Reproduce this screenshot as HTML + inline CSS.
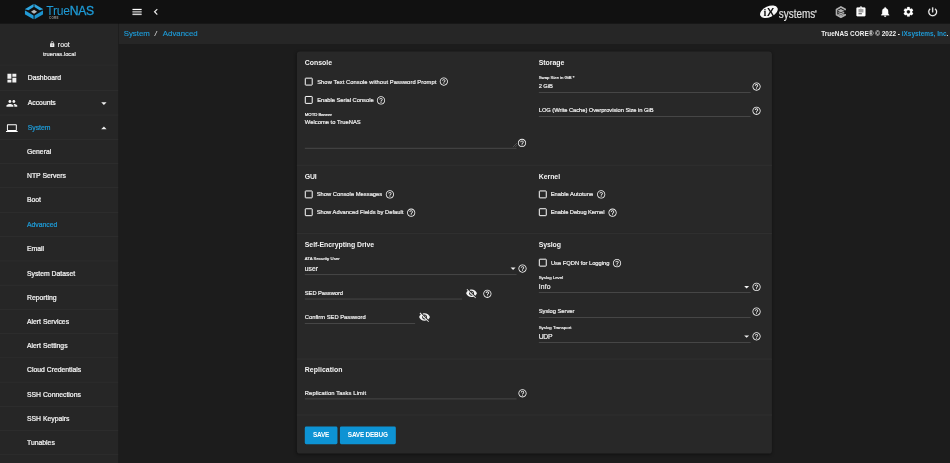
<!DOCTYPE html>
<html lang="en">
<head>
<meta charset="utf-8">
<title>TrueNAS - System Advanced</title>
<style>
*{box-sizing:border-box;margin:0;padding:0}
html,body{width:950px;height:463px;overflow:hidden;background:#1c1c1c}
body{font-family:"Liberation Sans",sans-serif;color:#fff}
#root{position:absolute;left:0;top:0;width:1920px;height:936px;transform:scale(0.494792,0.494658);transform-origin:0 0;background:#1c1c1c;overflow:hidden;filter:blur(0.45px)}
svg{display:block}
/* top bar */
#topbar{position:absolute;left:0;top:0;width:1920px;height:48px;background:#111}
#logo{position:absolute;left:0;top:0;width:240px;height:48px}
#logo .name{position:absolute;left:93.500px;top:6px;font-size:24.5px;color:#1e9bd7;letter-spacing:-0.55px;line-height:34px}
#logo .name b{font-weight:normal;-webkit-text-stroke:0.6px #1e9bd7}
#logo .core{position:absolute;left:99px;top:33px;font-size:6px;letter-spacing:0.6px;color:#999;font-weight:bold;line-height:8px}
.tbi{position:absolute;top:12px;width:24px;height:24px;fill:#fff;stroke:#fff;stroke-width:0.5px}
/* sidebar */
#side{position:absolute;left:0;top:48px;width:239px;height:888px;background:#262626}
#user{height:84px;border-bottom:1px solid #303030;text-align:center;position:relative}
#user .u1{position:absolute;left:0;width:240px;top:32.5px;font-size:14px;line-height:18px;color:#ededed;-webkit-text-stroke:0.3px}
#user .u2{position:absolute;left:0;width:240px;top:54px;font-size:11.7px;line-height:16px;color:#ededed;-webkit-text-stroke:0.35px}
.nav{position:relative;height:49.05px;border-bottom:1px solid #333;font-size:13.8px;line-height:49.5px;padding-left:54.5px;color:#f4f4f4;-webkit-text-stroke:0.45px}
.nav.top{height:50.7px;line-height:51.5px;padding-left:56px}
.nav.top svg{top:14px}
.nav.sys{height:49px;line-height:50.5px;padding-left:56px}
.nav.sys svg{top:13.5px}
.nav svg{position:absolute;left:12px;top:12px;width:24px;height:24px;fill:#f0f0f0}
.nav svg.ar{left:197px;width:26px;height:26px;margin-top:-1px}
.nav.act{color:#1e9bd7}
.nav.act svg.ic{fill:#fff}
/* breadcrumb */
#crumb{position:absolute;left:240px;top:48px;width:1680px;height:41px;background:#262626}
#crumb .bc{position:absolute;left:10px;top:0;font-size:15.8px;-webkit-text-stroke:0.3px;line-height:40px;color:#1e9bd7}
#crumb .bc i{color:#ddd;font-style:italic;padding:0 9px 0 10px;font-size:14px}
#crumb .cp{position:absolute;right:3.5px;top:0;font-size:13px;line-height:40px;color:#f0f0f0;font-weight:bold}
#crumb .cp span{color:#1e9bd7}
/* card */
#card{position:absolute;left:600px;top:104px;width:960px;height:813px;background:#282828;border-radius:6px;box-shadow:0 2px 6px rgba(0,0,0,.35)}
.hr{position:absolute;left:0;width:960px;height:2px;background:#303030;margin-top:-0.5px}
.h{position:absolute;font-size:14px;font-weight:bold;line-height:18px;color:#f4f4f4}
.cb{position:absolute;width:16px;height:16px;border:2.8px solid #fff;border-radius:2px}
.lb{position:absolute;font-size:11.7px;line-height:16px;color:#f2f2f2;white-space:nowrap;-webkit-text-stroke:0.38px #f2f2f2}
.lb.sv{font-size:13.7px}
.sl{position:absolute;font-size:8.7px;line-height:12px;color:#f2f2f2;white-space:nowrap;-webkit-text-stroke:0.38px #f2f2f2}
.ul{position:absolute;height:1px;background:#666}
.q{position:absolute;width:20px;height:20px;fill:#f2f2f2}
.eye{position:absolute;width:24px;height:24px;fill:#f2f2f2}
.dd{position:absolute;width:24px;height:24px;fill:#f2f2f2}
.btn{position:absolute;top:759px;height:36px;background:#0d93d4;border-radius:3px;color:#fff;font-size:13px;letter-spacing:-0.45px;font-weight:bold;line-height:36px;text-align:center}
</style>
</head>
<body>
<div id="root">
<div id="topbar">
<div id="logo">
<svg style="position:absolute;left:49.500px;top:7.500px" width="37.600" height="32" viewBox="0 0 220 180" preserveAspectRatio="none">
<polygon points="0,60 105,0 105,36 44,71" fill="#2ea6e0"/>
<polygon points="220,60 115,0 115,36 176,71" fill="#2ea6e0"/>
<polygon points="110,66 146,88 110,110 74,88" fill="#b4b8bb"/>
<polygon points="0,72 104,130 104,174 0,116" fill="#229bd6"/>
<polygon points="220,72 116,130 116,174 220,116" fill="#1d93cd"/>
</svg>
<div class="name">True<b>NAS</b></div>
<div class="core">CORE</div>
</div>
<svg class="tbi" style="left:265px" viewBox="0 0 24 24"><path d="M3 18h18v-2H3v2zm0-5h18v-2H3v2zm0-7v2h18V6H3z"/></svg>
<svg class="tbi" style="left:303px" viewBox="0 0 24 24"><path d="M15.41 7.41L14 6l-6 6 6 6 1.41-1.41L10.83 12z"/></svg>
<svg style="position:absolute;left:1534px;top:9px" width="40" height="30" viewBox="0 0 40 30"><ellipse cx="20" cy="14.800" rx="19" ry="11" transform="rotate(-24 20 14.800)" fill="#f6f6f6"/><text x="9" y="22.500" font-family="Liberation Serif, serif" font-size="21" font-weight="bold" fill="#111">i</text><text x="16" y="23" font-family="Liberation Sans, sans-serif" font-size="22" font-weight="bold" fill="#111">X</text></svg>
<div style="position:absolute;left:1574px;top:10px;font-size:26.5px;line-height:30px;color:#e4e4e4;white-space:nowrap;transform:scaleX(0.755);transform-origin:0 0;-webkit-text-stroke:0.3px #e4e4e4">systems<span style="font-size:6px;vertical-align:10px">®</span></div>
<svg style="position:absolute;left:1687px;top:12px" width="25" height="25" viewBox="0 0 24 24" fill="none" stroke="#b0b0b0" stroke-width="3.200" stroke-linejoin="miter"><path d="M20.200 8.500 20.200 6.500 12 2 3.500 6.800v10.400L12 22l8.200-4.500V15.500"/><path d="M12 6 18.500 9.300 12 12.600 5.500 9.300Z" fill="#b0b0b0" stroke="none"/><path d="M7 12.600 12 15.200l6.500-3.300M7 16 12 18.600l6.500-3.300" stroke-width="2.200"/></svg>
<svg class="tbi" style="left:1728px" viewBox="0 0 24 24"><path d="M19 3h-4.180C14.400 1.840 13.300 1 12 1c-1.300 0-2.400.840-2.820 2H5c-1.100 0-2 .900-2 2v14c0 1.100.900 2 2 2h14c1.100 0 2-.900 2-2V5c0-1.100-.900-2-2-2zm-7 0c.550 0 1 .450 1 1s-.450 1-1 1-1-.450-1-1 .450-1 1-1zm2 14H7v-2h7v2zm3-4H7v-2h10v2zm0-4H7V7h10v2z"/></svg>
<svg class="tbi" style="left:1777px" viewBox="0 0 24 24"><path d="M12 22c1.100 0 2-.900 2-2h-4c0 1.100.890 2 2 2zm6-6v-5c0-3.070-1.640-5.640-4.500-6.320V4c0-.830-.670-1.500-1.500-1.500s-1.500.670-1.500 1.500v.680C7.630 5.360 6 7.920 6 11v5l-2 2v1h16v-1l-2-2z"/></svg>
<svg class="tbi" style="left:1824px" viewBox="0 0 24 24"><path d="M19.140 12.940c.040-.300.060-.610.060-.940 0-.320-.020-.640-.070-.940l2.030-1.580c.180-.140.230-.410.120-.610l-1.920-3.320c-.120-.220-.370-.290-.590-.220l-2.390.960c-.500-.380-1.030-.700-1.620-.940l-.360-2.540c-.040-.240-.240-.410-.480-.410h-3.840c-.240 0-.430.170-.470.410l-.360 2.540c-.590.240-1.130.570-1.620.940l-2.390-.960c-.220-.080-.470 0-.590.220L2.740 8.870c-.120.210-.080.470.120.610l2.030 1.580c-.050.300-.090.630-.090.940s.020.640.070.940l-2.030 1.580c-.180.140-.230.410-.120.610l1.920 3.320c.120.220.370.290.590.220l2.390-.960c.500.380 1.030.700 1.620.940l.360 2.540c.050.240.240.410.480.410h3.840c.240 0 .440-.170.470-.410l.360-2.540c.590-.240 1.130-.560 1.620-.940l2.390.960c.220.080.470 0 .590-.220l1.920-3.320c.120-.220.070-.470-.120-.610l-2.010-1.580zM12 15.600c-1.980 0-3.600-1.620-3.600-3.600s1.620-3.600 3.600-3.600 3.600 1.620 3.600 3.600-1.620 3.600-3.600 3.600z"/></svg>
<svg class="tbi" style="left:1872.500px" viewBox="0 0 24 24"><path d="M13 3h-2v10h2V3zm4.830 2.170l-1.420 1.420C17.990 7.860 19 9.810 19 12c0 3.870-3.130 7-7 7s-7-3.130-7-7c0-2.190 1.010-4.140 2.580-5.420L6.170 5.170C4.230 6.820 3 9.260 3 12c0 4.970 4.030 9 9 9s9-4.030 9-9c0-2.740-1.230-5.180-3.170-6.830z"/></svg>
</div>
<div id="side">
<div id="user">
<div class="u1"><svg style="display:inline-block;vertical-align:-1px;margin-right:5px" width="13" height="13" viewBox="0 0 24 24" fill="#ededed"><path d="M18 8h-1V6c0-2.760-2.240-5-5-5S7 3.240 7 6v2H6c-1.100 0-2 .900-2 2v10c0 1.100.900 2 2 2h12c1.100 0 2-.900 2-2V10c0-1.100-.900-2-2-2zm-6 9c-1.100 0-2-.900-2-2s.900-2 2-2 2 .900 2 2-.900 2-2 2zm3.100-9H8.900V6c0-1.710 1.390-3.100 3.100-3.100 1.710 0 3.100 1.390 3.100 3.100v2z"/></svg>root</div>
<div class="u2">truenas.local</div>
</div>
<div class="nav top"><svg class="ic" viewBox="0 0 24 24"><path d="M3 13h8V3H3v10zm0 8h8v-6H3v6zm10 0h8V11h-8v10zm0-18v6h8V3h-8z"/></svg>Dashboard</div>
<div class="nav top"><svg class="ic" viewBox="0 0 24 24"><path d="M16 11c1.660 0 2.990-1.340 2.990-3S17.660 5 16 5c-1.660 0-3 1.340-3 3s1.340 3 3 3zm-8 0c1.660 0 2.990-1.340 2.990-3S9.660 5 8 5C6.340 5 5 6.340 5 8s1.340 3 3 3zm0 2c-2.330 0-7 1.170-7 3.500V19h14v-2.500c0-2.330-4.670-3.500-7-3.500zm8 0c-.290 0-.620.020-.970.050 1.160.840 1.970 1.970 1.970 3.450V19h6v-2.500c0-2.330-4.670-3.500-7-3.500z"/></svg>Accounts<svg class="ar" viewBox="0 0 24 24"><path d="M7 10l5 5 5-5z"/></svg></div>
<div class="nav act sys"><svg class="ic" viewBox="0 0 24 24"><path d="M20 18c1.100 0 1.990-.900 1.990-2L22 6c0-1.100-.900-2-2-2H4c-1.100 0-2 .900-2 2v10c0 1.100.900 2 2 2H0v2h24v-2h-4zM4 6h16v10H4V6z"/></svg>System<svg class="ar" viewBox="0 0 24 24"><path d="M7 14l5-5 5 5z"/></svg></div>
<div class="nav">General</div>
<div class="nav">NTP Servers</div>
<div class="nav">Boot</div>
<div class="nav act">Advanced</div>
<div class="nav">Email</div>
<div class="nav">System Dataset</div>
<div class="nav">Reporting</div>
<div class="nav">Alert Services</div>
<div class="nav">Alert Settings</div>
<div class="nav">Cloud Credentials</div>
<div class="nav">SSH Connections</div>
<div class="nav">SSH Keypairs</div>
<div class="nav">Tunables</div>
<div class="nav">Update</div>
</div>
<div id="crumb"><div class="bc">System<i>/</i> Advanced</div><div class="cp">TrueNAS CORE® © 2022 - <span>iXsystems, Inc</span>.</div></div>
<!--CARDSTART--><div id="card">
<div class="h" style="left:16px;top:14px;letter-spacing:-0.03px">Console</div>
<div class="cb" style="left:16px;top:52.5px"></div>
<div class="lb" style="left:41px;top:52.5px;letter-spacing:0.13px">Show Text Console without Password Prompt</div>
<svg class="q" style="left:287px;top:51px" viewBox="0 0 24 24"><path d="M11 18h2v-2h-2v2zm1-16C6.480 2 2 6.480 2 12s4.480 10 10 10 10-4.480 10-10S17.520 2 12 2zm0 18c-4.410 0-8-3.590-8-8s3.590-8 8-8 8 3.590 8 8-3.590 8-8 8zm0-14c-2.210 0-4 1.790-4 4h2c0-1.100.900-2 2-2s2 .900 2 2c0 2-3 1.750-3 5h2c0-2.250 3-2.500 3-5 0-2.210-1.790-4-4-4z"/></svg>
<div class="cb" style="left:16px;top:90px"></div>
<div class="lb" style="left:41px;top:90px;letter-spacing:-0.08px">Enable Serial Console</div>
<svg class="q" style="left:160px;top:89px" viewBox="0 0 24 24"><path d="M11 18h2v-2h-2v2zm1-16C6.480 2 2 6.480 2 12s4.480 10 10 10 10-4.480 10-10S17.520 2 12 2zm0 18c-4.410 0-8-3.590-8-8s3.590-8 8-8 8 3.590 8 8-3.590 8-8 8zm0-14c-2.210 0-4 1.790-4 4h2c0-1.100.900-2 2-2s2 .900 2 2c0 2-3 1.750-3 5h2c0-2.250 3-2.500 3-5 0-2.210-1.790-4-4-4z"/></svg>
<div class="sl" style="left:16px;top:121px;letter-spacing:-0.09px">MOTD Banner</div>
<div class="lb" style="left:16px;top:135px;letter-spacing:0.05px">Welcome to TrueNAS</div>
<div class="ul" style="left:16px;top:195px;width:428px"></div>
<svg class="q" style="left:445px;top:174.5px" viewBox="0 0 24 24"><path d="M11 18h2v-2h-2v2zm1-16C6.480 2 2 6.480 2 12s4.480 10 10 10 10-4.480 10-10S17.520 2 12 2zm0 18c-4.410 0-8-3.590-8-8s3.590-8 8-8 8 3.590 8 8-3.590 8-8 8zm0-14c-2.210 0-4 1.790-4 4h2c0-1.100.900-2 2-2s2 .900 2 2c0 2-3 1.750-3 5h2c0-2.250 3-2.500 3-5 0-2.210-1.790-4-4-4z"/></svg>
<svg style="position:absolute;left:436px;top:185px" width="9" height="9" viewBox="0 0 9 9" stroke="#777" stroke-width="1"><path d="M0 9 9 0M4.5 9 9 4.500"/></svg>
<div class="h" style="left:488.8px;top:14px;letter-spacing:-0.09px">Storage</div>
<div class="sl" style="left:488.8px;top:46px;letter-spacing:-0.05px">Swap Size in GiB *</div>
<div class="lb" style="left:488.8px;top:61px;letter-spacing:-0.21px">2 GiB</div>
<div class="ul" style="left:488.8px;top:82px;width:428px"></div>
<svg class="q" style="left:919px;top:61px" viewBox="0 0 24 24"><path d="M11 18h2v-2h-2v2zm1-16C6.480 2 2 6.480 2 12s4.480 10 10 10 10-4.480 10-10S17.520 2 12 2zm0 18c-4.410 0-8-3.590-8-8s3.590-8 8-8 8 3.590 8 8-3.590 8-8 8zm0-14c-2.210 0-4 1.790-4 4h2c0-1.100.900-2 2-2s2 .900 2 2c0 2-3 1.750-3 5h2c0-2.250 3-2.500 3-5 0-2.210-1.790-4-4-4z"/></svg>
<div class="lb" style="left:488.8px;top:110px;letter-spacing:-0.10px">LOG (Write Cache) Overprovision Size in GiB</div>
<div class="ul" style="left:488.8px;top:131px;width:428px"></div>
<svg class="q" style="left:919px;top:110px" viewBox="0 0 24 24"><path d="M11 18h2v-2h-2v2zm1-16C6.480 2 2 6.480 2 12s4.480 10 10 10 10-4.480 10-10S17.520 2 12 2zm0 18c-4.410 0-8-3.590-8-8s3.590-8 8-8 8 3.590 8 8-3.590 8-8 8zm0-14c-2.210 0-4 1.790-4 4h2c0-1.100.900-2 2-2s2 .900 2 2c0 2-3 1.750-3 5h2c0-2.250 3-2.500 3-5 0-2.210-1.790-4-4-4z"/></svg>
<div class="hr" style="top:229px"></div>
<div class="h" style="left:16px;top:242.8px;letter-spacing:-0.43px">GUI</div>
<div class="cb" style="left:16px;top:280.7px"></div>
<div class="lb" style="left:40px;top:280.7px;letter-spacing:0.03px">Show Console Messages</div>
<svg class="q" style="left:178px;top:279px" viewBox="0 0 24 24"><path d="M11 18h2v-2h-2v2zm1-16C6.480 2 2 6.480 2 12s4.480 10 10 10 10-4.480 10-10S17.520 2 12 2zm0 18c-4.410 0-8-3.590-8-8s3.590-8 8-8 8 3.590 8 8-3.590 8-8 8zm0-14c-2.210 0-4 1.790-4 4h2c0-1.100.900-2 2-2s2 .900 2 2c0 2-3 1.750-3 5h2c0-2.250 3-2.500 3-5 0-2.210-1.790-4-4-4z"/></svg>
<div class="cb" style="left:16px;top:317.3px"></div>
<div class="lb" style="left:40px;top:317.3px;letter-spacing:0.04px">Show Advanced Fields by Default</div>
<svg class="q" style="left:221px;top:315.8px" viewBox="0 0 24 24"><path d="M11 18h2v-2h-2v2zm1-16C6.480 2 2 6.480 2 12s4.480 10 10 10 10-4.480 10-10S17.520 2 12 2zm0 18c-4.410 0-8-3.590-8-8s3.590-8 8-8 8 3.590 8 8-3.590 8-8 8zm0-14c-2.210 0-4 1.790-4 4h2c0-1.100.900-2 2-2s2 .900 2 2c0 2-3 1.750-3 5h2c0-2.250 3-2.500 3-5 0-2.210-1.790-4-4-4z"/></svg>
<div class="h" style="left:488.8px;top:242.8px;letter-spacing:-0.08px">Kernel</div>
<div class="cb" style="left:488.8px;top:280.7px"></div>
<div class="lb" style="left:513px;top:280.7px;letter-spacing:0.01px">Enable Autotune</div>
<svg class="q" style="left:605px;top:279px" viewBox="0 0 24 24"><path d="M11 18h2v-2h-2v2zm1-16C6.480 2 2 6.480 2 12s4.480 10 10 10 10-4.480 10-10S17.520 2 12 2zm0 18c-4.410 0-8-3.590-8-8s3.590-8 8-8 8 3.590 8 8-3.590 8-8 8zm0-14c-2.210 0-4 1.790-4 4h2c0-1.100.900-2 2-2s2 .900 2 2c0 2-3 1.750-3 5h2c0-2.250 3-2.500 3-5 0-2.210-1.790-4-4-4z"/></svg>
<div class="cb" style="left:488.8px;top:317.3px"></div>
<div class="lb" style="left:513px;top:317.3px;letter-spacing:-0.14px">Enable Debug Kernel</div>
<svg class="q" style="left:628px;top:315.8px" viewBox="0 0 24 24"><path d="M11 18h2v-2h-2v2zm1-16C6.480 2 2 6.480 2 12s4.480 10 10 10 10-4.480 10-10S17.520 2 12 2zm0 18c-4.410 0-8-3.590-8-8s3.590-8 8-8 8 3.590 8 8-3.590 8-8 8zm0-14c-2.210 0-4 1.790-4 4h2c0-1.100.900-2 2-2s2 .900 2 2c0 2-3 1.750-3 5h2c0-2.250 3-2.500 3-5 0-2.210-1.790-4-4-4z"/></svg>
<div class="hr" style="top:367px"></div>
<div class="h" style="left:16px;top:382px;letter-spacing:-0.11px">Self-Encrypting Drive</div>
<div class="sl" style="left:16px;top:412.5px;letter-spacing:0.05px">ATA Security User</div>
<div class="lb sv" style="left:16px;top:431.5px;letter-spacing:-0.04px">user</div>
<div class="ul" style="left:16px;top:451px;width:428px"></div>
<svg class="dd" style="left:425px;top:427px" viewBox="0 0 24 24"><path d="M7 10l5 5 5-5z"/></svg>
<svg class="q" style="left:446px;top:429px" viewBox="0 0 24 24"><path d="M11 18h2v-2h-2v2zm1-16C6.480 2 2 6.480 2 12s4.480 10 10 10 10-4.480 10-10S17.520 2 12 2zm0 18c-4.410 0-8-3.590-8-8s3.590-8 8-8 8 3.590 8 8-3.590 8-8 8zm0-14c-2.210 0-4 1.790-4 4h2c0-1.100.900-2 2-2s2 .900 2 2c0 2-3 1.750-3 5h2c0-2.250 3-2.500 3-5 0-2.210-1.790-4-4-4z"/></svg>
<div class="lb" style="left:16px;top:480px;letter-spacing:-0.13px">SED Password</div>
<div class="ul" style="left:16px;top:500px;width:318px"></div>
<svg class="eye" style="left:341px;top:477px" viewBox="0 0 24 24"><path d="M12 7c2.760 0 5 2.240 5 5 0 .650-.130 1.260-.360 1.830l2.920 2.920c1.510-1.260 2.700-2.890 3.430-4.750-1.730-4.390-6-7.500-11-7.500-1.400 0-2.740.250-3.980.700l2.160 2.160C10.740 7.130 11.350 7 12 7zM2 4.270l2.280 2.280.460.460C3.080 8.300 1.780 10.020 1 12c1.730 4.390 6 7.500 11 7.500 1.550 0 3.030-.300 4.380-.840l.420.420L19.730 22 21 20.730 3.270 3 2 4.270zM7.530 9.800l1.550 1.550c-.050.210-.080.430-.080.650 0 1.660 1.340 3 3 3 .220 0 .440-.030.650-.080l1.550 1.550c-.670.330-1.410.530-2.200.530-2.760 0-5-2.240-5-5 0-.790.200-1.530.530-2.200zm4.310-.780l3.150 3.150.020-.160c0-1.660-1.340-3-3-3l-.170.010z"/></svg>
<svg class="q" style="left:375px;top:480px" viewBox="0 0 24 24"><path d="M11 18h2v-2h-2v2zm1-16C6.480 2 2 6.480 2 12s4.480 10 10 10 10-4.480 10-10S17.520 2 12 2zm0 18c-4.410 0-8-3.590-8-8s3.590-8 8-8 8 3.590 8 8-3.590 8-8 8zm0-14c-2.210 0-4 1.790-4 4h2c0-1.100.900-2 2-2s2 .900 2 2c0 2-3 1.750-3 5h2c0-2.250 3-2.500 3-5 0-2.210-1.790-4-4-4z"/></svg>
<div class="lb" style="left:16px;top:529px;letter-spacing:0.01px">Confirm SED Password</div>
<div class="ul" style="left:16px;top:549px;width:223px"></div>
<svg class="eye" style="left:246px;top:525px" viewBox="0 0 24 24"><path d="M12 7c2.760 0 5 2.240 5 5 0 .650-.130 1.260-.360 1.830l2.920 2.920c1.510-1.260 2.700-2.890 3.430-4.750-1.730-4.390-6-7.500-11-7.500-1.400 0-2.740.250-3.980.700l2.160 2.160C10.740 7.130 11.350 7 12 7zM2 4.270l2.280 2.280.460.460C3.080 8.300 1.780 10.020 1 12c1.730 4.390 6 7.500 11 7.500 1.550 0 3.030-.300 4.380-.840l.420.420L19.730 22 21 20.730 3.270 3 2 4.270zM7.530 9.800l1.550 1.550c-.050.210-.080.430-.080.650 0 1.660 1.340 3 3 3 .220 0 .440-.030.650-.080l1.550 1.550c-.670.330-1.410.530-2.200.530-2.760 0-5-2.240-5-5 0-.790.200-1.530.530-2.200zm4.310-.780l3.150 3.150.020-.160c0-1.660-1.340-3-3-3l-.170.010z"/></svg>
<div class="h" style="left:488.8px;top:382px;letter-spacing:-0.18px">Syslog</div>
<div class="cb" style="left:488.8px;top:419px"></div>
<div class="lb" style="left:513.4px;top:419px;letter-spacing:-0.03px">Use FQDN for Logging</div>
<svg class="q" style="left:637px;top:418px" viewBox="0 0 24 24"><path d="M11 18h2v-2h-2v2zm1-16C6.480 2 2 6.480 2 12s4.480 10 10 10 10-4.480 10-10S17.520 2 12 2zm0 18c-4.410 0-8-3.590-8-8s3.590-8 8-8 8 3.590 8 8-3.590 8-8 8zm0-14c-2.210 0-4 1.790-4 4h2c0-1.100.900-2 2-2s2 .900 2 2c0 2-3 1.750-3 5h2c0-2.250 3-2.500 3-5 0-2.210-1.790-4-4-4z"/></svg>
<div class="sl" style="left:488.8px;top:451.5px;letter-spacing:0.00px">Syslog Level</div>
<div class="lb sv" style="left:488.8px;top:468.5px;letter-spacing:0.39px">Info</div>
<div class="ul" style="left:488.8px;top:487.4px;width:428px"></div>
<svg class="dd" style="left:897px;top:464px" viewBox="0 0 24 24"><path d="M7 10l5 5 5-5z"/></svg>
<svg class="q" style="left:919px;top:466px" viewBox="0 0 24 24"><path d="M11 18h2v-2h-2v2zm1-16C6.480 2 2 6.480 2 12s4.480 10 10 10 10-4.480 10-10S17.520 2 12 2zm0 18c-4.410 0-8-3.590-8-8s3.590-8 8-8 8 3.590 8 8-3.590 8-8 8zm0-14c-2.210 0-4 1.790-4 4h2c0-1.100.900-2 2-2s2 .900 2 2c0 2-3 1.750-3 5h2c0-2.250 3-2.500 3-5 0-2.210-1.790-4-4-4z"/></svg>
<div class="lb" style="left:488.8px;top:516.5px;letter-spacing:-0.06px">Syslog Server</div>
<div class="ul" style="left:488.8px;top:536.7px;width:428px"></div>
<svg class="q" style="left:919px;top:516px" viewBox="0 0 24 24"><path d="M11 18h2v-2h-2v2zm1-16C6.480 2 2 6.480 2 12s4.480 10 10 10 10-4.480 10-10S17.520 2 12 2zm0 18c-4.410 0-8-3.590-8-8s3.590-8 8-8 8 3.590 8 8-3.590 8-8 8zm0-14c-2.210 0-4 1.790-4 4h2c0-1.100.900-2 2-2s2 .900 2 2c0 2-3 1.750-3 5h2c0-2.250 3-2.500 3-5 0-2.210-1.790-4-4-4z"/></svg>
<div class="sl" style="left:488.8px;top:552px;letter-spacing:0.05px">Syslog Transport</div>
<div class="lb sv" style="left:488.8px;top:568.5px;letter-spacing:-0.50px">UDP</div>
<div class="ul" style="left:488.8px;top:588.3px;width:428px"></div>
<svg class="dd" style="left:897px;top:564px" viewBox="0 0 24 24"><path d="M7 10l5 5 5-5z"/></svg>
<svg class="q" style="left:919px;top:566px" viewBox="0 0 24 24"><path d="M11 18h2v-2h-2v2zm1-16C6.480 2 2 6.480 2 12s4.480 10 10 10 10-4.480 10-10S17.520 2 12 2zm0 18c-4.410 0-8-3.590-8-8s3.590-8 8-8 8 3.590 8 8-3.590 8-8 8zm0-14c-2.210 0-4 1.790-4 4h2c0-1.100.900-2 2-2s2 .900 2 2c0 2-3 1.750-3 5h2c0-2.250 3-2.500 3-5 0-2.210-1.790-4-4-4z"/></svg>
<div class="hr" style="top:621px"></div>
<div class="h" style="left:16px;top:635.3px;letter-spacing:0.06px">Replication</div>
<div class="lb" style="left:16px;top:681.6px;letter-spacing:0.23px">Replication Tasks Limit</div>
<div class="ul" style="left:16px;top:702.4px;width:428px"></div>
<svg class="q" style="left:446px;top:681px" viewBox="0 0 24 24"><path d="M11 18h2v-2h-2v2zm1-16C6.480 2 2 6.480 2 12s4.480 10 10 10 10-4.480 10-10S17.520 2 12 2zm0 18c-4.410 0-8-3.590-8-8s3.590-8 8-8 8 3.590 8 8-3.590 8-8 8zm0-14c-2.210 0-4 1.790-4 4h2c0-1.100.900-2 2-2s2 .900 2 2c0 2-3 1.750-3 5h2c0-2.250 3-2.500 3-5 0-2.210-1.790-4-4-4z"/></svg>
<div class="hr" style="top:734px"></div>
<div class="btn" style="left:16px;top:757.6px;width:65.5px">SAVE</div>
<div class="btn" style="left:86.60000000000002px;top:757.6px;width:113.4px">SAVE DEBUG</div>
</div><!--CARDEND-->
</div>
</body>
</html>
